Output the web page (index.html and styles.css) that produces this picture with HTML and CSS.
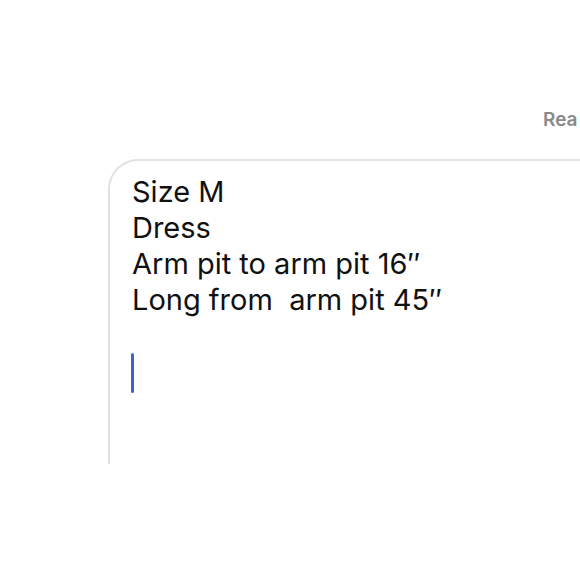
FILE: index.html
```html
<!DOCTYPE html>
<html>
<head>
<meta charset="utf-8">
<link rel="stylesheet" href="styles.css">
</head>
<body>
<div class="page">
  <div class="topbar"><span class="read">Rea</span></div>
  <div class="editor">
    <div class="text">
      <div>Size M</div>
      <div>Dress</div>
      <div>Arm pit to arm pit 16″</div>
      <div>Long from&nbsp; arm pit 45″</div>
    </div>
    <div class="caret"></div>
  </div>
</div>
</body>
</html>
```
FILE: styles.css
```css
html, body {
  margin: 0;
  padding: 0;
  background: #ffffff;
  overflow: hidden;
}
.page {
  width: 580px;
  height: 580px;
  overflow: hidden;
  font-family: Inter, "Liberation Sans", Arial, sans-serif;
}
.topbar {
  height: 40px;
  padding-top: 108px;
  padding-left: 543px;
  white-space: nowrap;
  overflow: hidden;
}
.read {
  font-size: 19px;
  font-weight: 600;
  color: #8a8a8a;
  line-height: 24px;
}
.editor {
  margin-top: 11px;
  margin-left: 108px;
  width: 560px;
  height: 305px;
  border-top: 2px solid #e2e2e2;
  border-left: 2px solid #e2e2e2;
  border-top-left-radius: 30px;
  box-sizing: border-box;
  padding-top: 13px;
  padding-left: 22px;
}
.text {
  font-size: 29px;
  line-height: 36px;
  color: #111;
  white-space: nowrap;
}
.caret {
  margin-top: 35px;
  margin-left: -1px;
  width: 3px;
  height: 40px;
  border-radius: 2px;
  background: #3c63d2;
}
```
